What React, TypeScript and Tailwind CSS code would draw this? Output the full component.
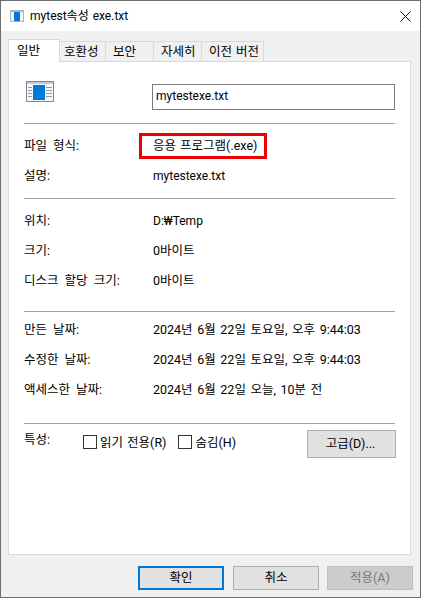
import React from "react";

function Row({ label, value, valueClass = "" }: { label: string; value: string; valueClass?: string }) {
  return (
    <div className="flex h-[30px] items-center pt-[2px]">
      <div className="w-[129px] shrink-0 [word-spacing:3px]">{label}</div>
      <div className={valueClass}>{value}</div>
    </div>
  );
}

function Rule() {
  return <div className="h-px bg-[#a0a0a0]" />;
}

function Tab({ label, active = false, className }: { label: string; active?: boolean; className: string }) {
  return active ? (
    <div className={"relative z-10 flex h-[23px] items-center border border-b-0 border-[#d9d9d9] bg-white pb-[1px] " + className}>{label}</div>
  ) : (
    <div className={"-ml-px flex h-[21px] items-center border border-b-0 border-[#d9d9d9] bg-[#f0f0f0] pb-px " + className}>{label}</div>
  );
}

function Check({ label }: { label: string }) {
  return (
    <div className="flex items-center gap-[3px]">
      <div className="h-[14px] w-[14px] border border-[#333] bg-white" />
      <span className="pt-[2px]">{label}</span>
    </div>
  );
}

function Btn({ label, className }: { label: string; className: string }) {
  return <div className={"flex items-center justify-center " + className}>{label}</div>;
}

const DATE = "[word-spacing:1.5px]";
const LATIN = "text-[12px]";

export default function App() {
  return (
    <div
      className="flex h-[598px] w-[421px] flex-col overflow-hidden border border-[#6e6e6e] bg-[#f0f0f0] text-[12.5px] leading-[18px] text-black [word-spacing:1px]"
      style={{ fontFamily: 'Roboto,"Noto Sans CJK KR",sans-serif' }}
    >
      <div className="flex h-[30px] shrink-0 items-center bg-white pl-[9px] pr-[9px]">
        <svg width="14" height="12" viewBox="0 0 14 12" className="mr-[6px]">
          <rect x="0" y="0" width="14" height="12" fill="#a9b4c0" />
          <rect x="1" y="2" width="12" height="9" fill="#f4f6f8" />
          <rect x="4" y="2" width="6" height="9" fill="#0078d7" />
        </svg>
        <span className="flex-1 text-[12px]">mytest속성 exe.txt</span>
        <svg width="11" height="11" viewBox="0 0 11 11">
          <path d="M0.5 0.5L10.5 10.5M10.5 0.5L0.5 10.5" stroke="#111" strokeWidth="1" fill="none" />
        </svg>
      </div>

      <div className="flex flex-1 flex-col pl-[7px]">
        <div className="mt-[8px] -mb-px flex h-[23px] shrink-0 items-end">
          <Tab label="일반" active className="w-[52px] pl-[8px]" />
          <Tab label="호환성" className="w-[47px] pl-[4px]" />
          <Tab label="보안" className="w-[49px] pl-[7px]" />
          <Tab label="자세히" className="w-[49px] pl-[7px]" />
          <Tab label="이전 버전" className="w-[63px] pl-[7px]" />
        </div>

        <div className="h-[494px] w-[403px] border border-[#d9d9d9] bg-white px-[15px]">
          <div className="mt-[19px] flex items-start">
            <svg width="28" height="21" viewBox="0 0 28 21" className="ml-[2px]">
              <rect x="0.5" y="0.5" width="27" height="20" fill="#f5f7f9" stroke="#7a8590" />
              <rect x="1" y="1" width="26" height="2" fill="#c3ccd6" />
              <rect x="7" y="4" width="12" height="15" fill="#0078d7" />
              <path d="M2 6.5h4M2 9.5h4M2 12.5h4M2 15.5h4M20 6.5h6M20 9.5h6M20 12.5h6M20 15.5h6" stroke="#8e98a3" strokeWidth="1" />
            </svg>
            <div className="mt-[3px] ml-[98px] flex h-[26px] w-[243px] items-center border border-[#7a7a7a] px-[3px] pb-[2px] text-[12px]">mytestexe.txt</div>
          </div>

          <div className="mt-[13px]"><Rule /></div>
          <div className="relative mt-[6px]">
            <Row label="파일 형식:" value="응용 프로그램(.exe)" />
            <div className="absolute left-[115px] top-[3px] h-[26px] w-[128px] border-[3px] border-[#ee0000]" />
          </div>
          <Row label="설명:" value="mytestexe.txt" valueClass={LATIN} />
          <div className="mt-[8px]"><Rule /></div>
          <div className="mt-[6px]">
            <Row label="위치:" value="D:₩Temp" valueClass={LATIN} />
            <Row label="크기:" value="0바이트" />
            <Row label="디스크 할당 크기:" value="0바이트" />
          </div>
          <div className="mt-[16px]"><Rule /></div>
          <div className="mt-[2px]">
            <Row label="만든 날짜:" value="2024년 6월 22일 토요일, 오후 9:44:03" valueClass={DATE} />
            <Row label="수정한 날짜:" value="2024년 6월 22일 토요일, 오후 9:44:03" valueClass={DATE} />
            <Row label="액세스한 날짜:" value="2024년 6월 22일 오늘, 10분 전" valueClass={DATE} />
          </div>
          <div className="mt-[19px]"><Rule /></div>
          <div className="mt-[6px] flex items-start">
            <div className="mt-px w-[59px] shrink-0">특성:</div>
            <div className="mt-[2px] flex gap-[12px]">
              <Check label="읽기 전용(R)" />
              <Check label="숨김(H)" />
            </div>
            <Btn label="고급(D)..." className="ml-auto -mr-[1px] h-[28px] w-[89px] border border-[#adadad] bg-[#e1e1e1] pr-[2px]" />
          </div>
        </div>

        <div className="mt-[11px] flex pl-[130px]">
          <Btn label="확인" className="h-[24px] w-[86px] border-2 border-[#0078d7] bg-[#e1e1e1]" />
          <Btn label="취소" className="ml-[9px] h-[24px] w-[86px] border border-[#adadad] bg-[#e1e1e1]" />
          <Btn label="적용(A)" className="ml-[8px] h-[24px] w-[86px] border border-[#bfbfbf] bg-[#cccccc] text-[#7a7a7a]" />
        </div>
      </div>
    </div>
  );
}
